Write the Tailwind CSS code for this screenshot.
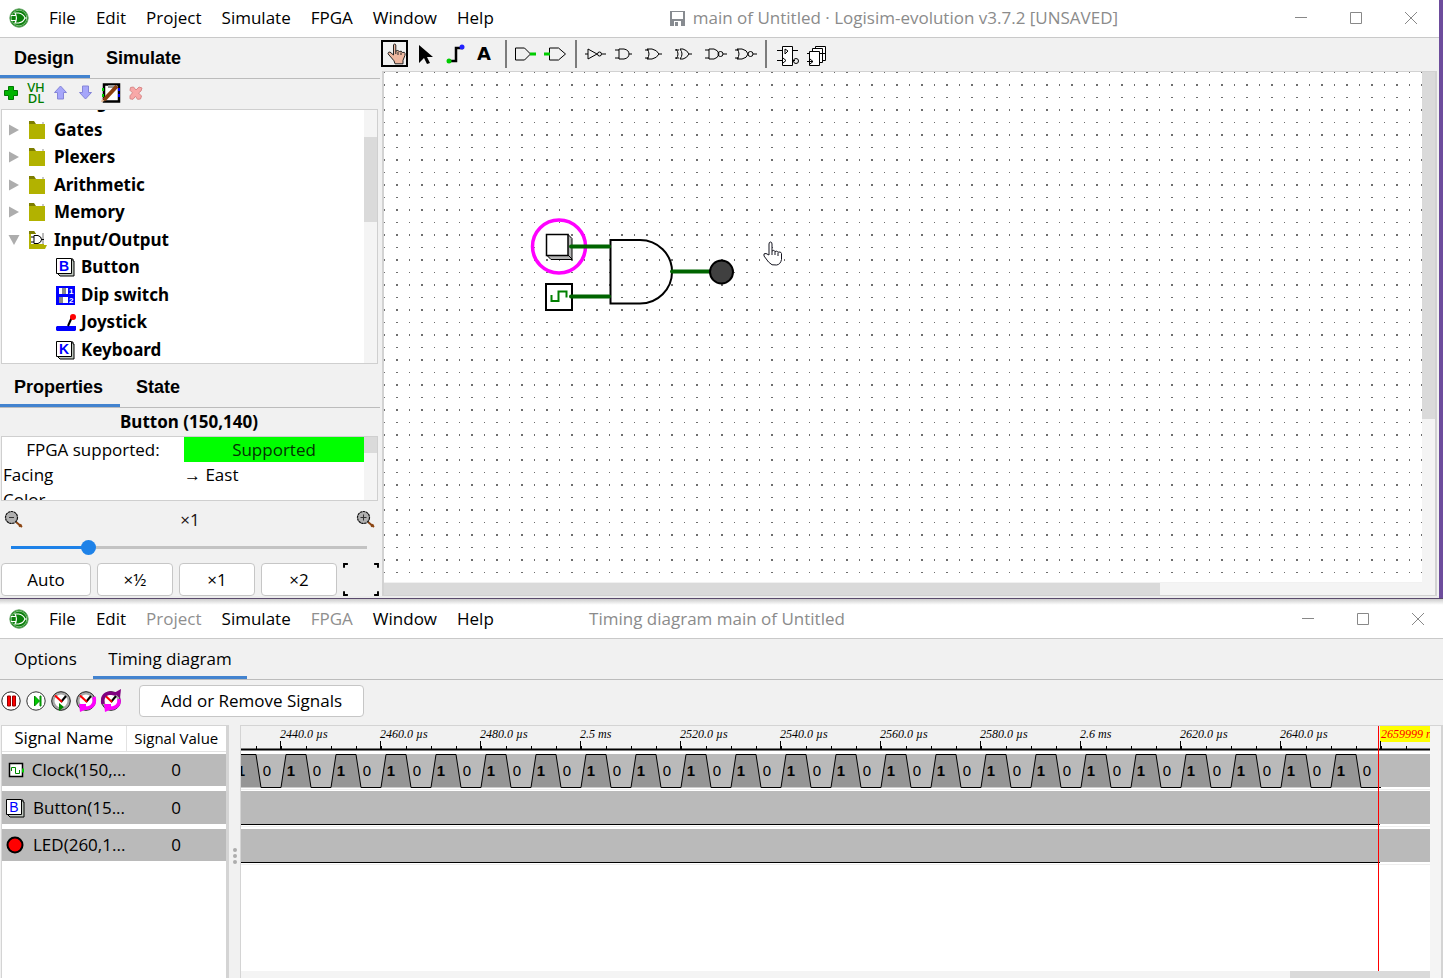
<!DOCTYPE html>
<html lang="en">
<head>
<meta charset="utf-8">
<title>Logisim-evolution</title>
<script src="https://cdn.jsdelivr.net/npm/@tailwindcss/browser@4"></script>
</head>
<body class="bg-[#f1f1f1] font-['Open_Sans','Noto_Sans',sans-serif] text-[17px] leading-6 text-black min-h-screen flex flex-col overflow-hidden">

<svg class="hidden">
  <symbol id="logo" viewBox="0 0 20 20">
    <circle cx="10" cy="10" r="9.2" fill="#0a7f0a" stroke="#6aa86a"/>
    <circle cx="10" cy="10" r="7.800" fill="none" stroke="#cfe8cf" stroke-width=".6"/>
    <path d="M2 7.500h5M2 12.500h5M6 5h3.500C13 5.500 15 7.500 16 10c-1 2.500-3 4.500-6.500 5H6c2-3.500 2-6.500 0-10zM16 10h2" fill="none" stroke="#fff" stroke-width="1.200"/>
  </symbol>
  <symbol id="folder" viewBox="0 0 18 20">
    <path d="M1 1h5l2 3H1z" fill="#7d7d00"/><path d="M14 2h2v2h-2z" fill="#c8c8c8"/><path d="M1 4h16v15H1z" fill="#b2b200"/>
  </symbol>
  <symbol id="right" viewBox="0 0 10 12"><path d="M0 0.500 10 6 0 11.500z" fill="#adadad"/></symbol>
  <symbol id="key" viewBox="0 0 20 20">
    <path d="M17 2h1v2h1v15H5l-2-2" fill="#c0c8c0" stroke="#000"/><path d="M1.500 1.500h15v15h-15z" fill="#fff" stroke="#000"/>
  </symbol>
  <symbol id="lens" viewBox="0 0 20 20">
    <path d="m12 12 6 5" stroke="#8b4513" stroke-width="2"/><path d="m15 16.500 2.500-2" stroke="#8b4513" stroke-width="2"/><circle cx="7.500" cy="7.500" r="6" fill="#b0b0b0" stroke="#111" stroke-width="1.200" stroke-dasharray="2.500 .5"/>
  </symbol>
  <symbol id="clockface" viewBox="0 0 20 20">
    <circle cx="10" cy="10" r="8" fill="#fff" stroke="#a8a8a8" stroke-width="3"/><circle cx="10" cy="10" r="9.300" fill="none" stroke="#222" stroke-width="1"/>
    <path d="m10 11 5-6" stroke="#000" stroke-width="2"/><path d="M4 4.500 11 11" stroke="#f00" stroke-width="2"/>
  </symbol>
</svg>

<!-- Main window -->
<section class="flex bg-[#6d4c9c]">
 <div class="flex-1 min-w-0 bg-[#f1f1f1] mr-1 border-b-2 border-[#ececec]">
  <header class="h-[38px] bg-white border-b border-[#c9c9c9] flex items-center pl-[9px] pr-[21px] pb-[1px]">
    <svg class="size-5 mr-5"><use href="#logo"/></svg>
    <nav class="flex gap-5">
      <button>File</button><button>Edit</button><button>Project</button><button>Simulate</button><button>FPGA</button><button>Window</button><button>Help</button>
    </nav>
    <h1 class="flex-1 flex justify-center items-center gap-2 text-[#8b8b8b] whitespace-nowrap">
      <svg class="size-[15px]" viewBox="0 0 15 15"><path d="M0 0h15v15H0z" fill="#878b90"/><path d="M2 1h11v7H2z" fill="#fff"/><path d="M4 10h7v5H4z" fill="#fff"/><path d="M5 11h3v4H5z" fill="#878b90"/></svg>
      main of Untitled · Logisim-evolution v3.7.2 [UNSAVED]</h1>
    <div class="flex gap-[41px]">
      <button aria-label="Minimize"><svg class="w-[14px] h-[14px]"><path d="M1 6.500h12" stroke="#888"/></svg></button>
      <button aria-label="Maximize"><svg class="w-[14px] h-[14px]"><path d="M1.500 1.500h11v11h-11z" fill="none" stroke="#888"/></svg></button>
      <button aria-label="Close"><svg class="w-[14px] h-[14px]"><path d="m1 1 12 12M13 1 1 13" stroke="#888"/></svg></button>
    </div>
  </header>

  <div class="flex">
   <aside class="w-[382px] shrink-0 flex flex-col">
    <div class="h-[41px] mr-[2px] border-b border-[#bcbcbc] flex font-['Liberation_Sans',sans-serif] font-bold text-[18px]">
      <button class="w-[90px] border-b-3 border-[#4383cf] pl-[14px] pt-[3px] text-left">Design</button>
      <button class="px-4">Simulate</button>
    </div>
    <div class="h-[30px] flex items-center gap-[5px] pl-[1px] pb-[2px]">
      <button aria-label="Add circuit"><svg class="size-5 block"><path d="M7.500 3.500h5v4h4v5h-4v4h-5v-4h-4v-5h4z" fill="#00b400" stroke="#007800"/></svg></button>
      <button aria-label="Add VHDL" class="w-5 flex flex-col items-center font-['Noto_Sans'] text-[13px] leading-[11px] text-[#007d00] font-medium"><span>VH</span><span>DL</span></button>
      <button aria-label="Move up"><svg class="size-5 block"><path d="m9.500 3 6 6.500h-3V16h-6V9.500h-3z" fill="#a6a6fa" stroke="#8585d8"/></svg></button>
      <button aria-label="Move down"><svg class="size-5 block"><path d="m9.500 16 6-6.500h-3V3h-6v6.500h-3z" fill="#a6a6fa" stroke="#8585d8"/></svg></button>
      <button aria-label="Edit appearance"><svg class="size-5 block"><path d="M3 1.500h15v17H3z" fill="#fff" stroke="#000" stroke-width="2.500"/><path d="M2 5v3m0 3v3" stroke="#0c0" stroke-width="2"/><path d="M18 5v3m0 3v3" stroke="#00f" stroke-width="2"/><path d="M7 3.500h9" stroke="#999" stroke-width="3"/><path d="m3 17 13-14" stroke="#8b4010" stroke-width="4"/><path d="m0 19 1-3 3 2z" fill="#e8b890"/></svg></button>
      <button aria-label="Delete"><svg class="size-5 block"><path d="m4.500 4.500 3-.5 2.500 3 3-3 3 1-1 3-2.500 2 3 3-1 3-3 .3-2-3-2.500 3-3-.5v-3l2.500-3-2.500-2.500z" fill="#f8a8a8" stroke="#d98888"/></svg></button>
    </div>
    <div class="ml-[1px] mr-1 border border-[#cfcfcf] bg-white flex font-['Noto_Sans',sans-serif] font-bold">
      <ul class="flex-1">
        <li class="h-[6px] overflow-hidden flex items-end pl-[52px]"><span class="leading-[28px] text-[16px]">Wiring</span></li>
        <li class="h-[27px] flex items-center pl-[7px]"><svg class="w-[10px] h-3 mr-[9px]"><use href="#right"/></svg><svg class="w-[18px] h-5 mr-2"><use href="#folder"/></svg>Gates</li>
        <li class="h-7 flex items-center pl-[7px]"><svg class="w-[10px] h-3 mr-[9px]"><use href="#right"/></svg><svg class="w-[18px] h-5 mr-2"><use href="#folder"/></svg>Plexers</li>
        <li class="h-[27px] flex items-center pl-[7px]"><svg class="w-[10px] h-3 mr-[9px]"><use href="#right"/></svg><svg class="w-[18px] h-5 mr-2"><use href="#folder"/></svg>Arithmetic</li>
        <li class="h-7 flex items-center pl-[7px]"><svg class="w-[10px] h-3 mr-[9px]"><use href="#right"/></svg><svg class="w-[18px] h-5 mr-2"><use href="#folder"/></svg>Memory</li>
        <li class="h-[27px] flex items-center pl-[6px]"><svg class="w-3 h-[10px] mr-2"><path d="M.5 0h11L6 10z" fill="#adadad"/></svg><svg class="w-[20px] h-5 mr-[6px]"><path d="M1 1h5l2 3h8v11h3l-2 4H1z" fill="#b2b200"/><path d="M1 1h5l2 3H1z" fill="#7d7d00"/><path d="M3 4h12v10H3z" fill="#fff"/><path d="M14 3h2v11h-2z" fill="#bbb"/><path d="M3 7h3m-3 5h3m0-6.500h4q3.500 1 3.500 4t-3.500 4H6zM13 9.500h3" fill="none" stroke="#000"/></svg>Input/Output</li>
        <li class="h-7 flex items-center pl-[53px]"><svg class="size-5 mr-[6px]"><use href="#key"/><text x="9" y="14" text-anchor="middle" font-size="14" fill="#00f" font-family="Liberation Sans">B</text></svg>Button</li>
        <li class="h-[27px] flex items-center pl-[53px]"><svg class="size-5 mr-[6px]"><path d="M1 1h19v19H1z" fill="#00f"/><path d="M4 3h9v6H4zM4 12h9v6H4z" fill="#fff"/><path d="M7 3h4v6H7zM4 12h4v6H4z" fill="#888"/><text x="14" y="9" font-size="8" fill="#fff" font-family="Liberation Sans">1</text><text x="14" y="18" font-size="8" fill="#fff" font-family="Liberation Sans">2</text></svg>Dip switch</li>
        <li class="h-7 flex items-center pl-[53px]"><svg class="w-[22px] h-5 mr-1"><path d="M2 14h19v4l-1 1H2l-1-1v-3z" fill="#00f"/><path d="m13 14 4-9" stroke="#000" stroke-width="2"/><circle cx="18" cy="5" r="3" fill="#f00"/></svg>Joystick</li>
        <li class="h-[27px] flex items-center pl-[53px]"><svg class="size-5 mr-[6px]"><use href="#key"/><text x="9" y="14" text-anchor="middle" font-size="14" fill="#00f" font-family="Liberation Sans">K</text></svg>Keyboard</li>
      </ul>
      <div class="w-[13px] bg-[#f4f4f4] pt-[27px]"><div class="h-[85px] bg-[#dadada]"></div></div>
    </div>

    <div class="h-11 mr-[2px] border-b border-[#bcbcbc] flex font-['Liberation_Sans',sans-serif] font-bold text-[18px]">
      <button class="w-[120px] border-b-3 border-[#4383cf] pl-[14px] pt-[5px] text-left">Properties</button>
      <button class="px-4 pt-[3px]">State</button>
    </div>
    <h2 class="h-7 text-center font-['Noto_Sans',sans-serif] font-bold leading-[27px] pr-1">Button (150,140)</h2>
    <div class="ml-[1px] mr-1 h-[65px] overflow-hidden border border-[#cfcfcf] bg-white flex">
      <table class="flex-1 flex flex-col leading-[26px]">
        <tbody class="flex flex-col">
        <tr class="flex h-[25px]"><td class="w-[182px] text-center">FPGA supported:</td><td class="flex-1 bg-[#00ff00] text-center text-[#043004]">Supported</td></tr>
        <tr class="flex h-[25px]"><td class="w-[182px] pl-[1px]">Facing</td><td class="flex-1">→ East</td></tr>
        <tr class="flex h-[25px]"><td class="w-[182px] pl-[1px]">Color</td><td></td></tr>
        </tbody>
      </table>
      <div class="w-[13px] bg-[#f4f4f4]"><div class="h-4 bg-[#dadada]"></div></div>
    </div>
    <div class="h-[37px] flex items-center justify-between pl-1 pr-[6px]">
      <svg class="size-5"><use href="#lens"/><path d="M5 7.500h5" stroke="#333"/></svg>
      <output class="text-[#201010]">×1</output>
      <svg class="size-5"><use href="#lens"/><path d="M4.500 7.500h6m-3-3v6" stroke="#333"/></svg>
    </div>
    <div class="h-[25px] flex items-start pl-[11px] pr-[15px]">
      <input type="range" aria-label="Zoom" min="0" max="200" value="41" class="w-full h-[18px] appearance-none bg-[linear-gradient(90deg,#1e82e8_22%,#c3c3c3_22%)] bg-[length:100%_3px] bg-center bg-no-repeat [&::-webkit-slider-thumb]:appearance-none [&::-webkit-slider-thumb]:size-[15px] [&::-webkit-slider-thumb]:rounded-full [&::-webkit-slider-thumb]:bg-[#1e82e8]">
    </div>
    <div class="flex gap-[6px] pl-[1px] pr-[3px] h-[33px]">
      <button class="w-[90px] border border-[#c6c6c6] rounded bg-white">Auto</button>
      <button class="w-[76px] border border-[#c6c6c6] rounded bg-white">×½</button>
      <button class="w-[76px] border border-[#c6c6c6] rounded bg-white">×1</button>
      <button class="w-[76px] border border-[#c6c6c6] rounded bg-white">×2</button>
      <button aria-label="Fit" class="flex-1"><svg class="w-full h-[33px] block" viewBox="0 0 37 34"><path d="M1 5V1h4M32 1h4v4M1 29v4h4M32 33h4v-4" fill="none" stroke="#000" stroke-width="2"/></svg></button>
    </div>
   </aside>

   <main class="flex-1 min-w-0 flex flex-col">
    <div class="h-[33px]" role="toolbar">
     <svg class="w-[470px] h-[33px] block overflow-visible" fill="none" stroke="#000">
      <path d="M0 3h25v25H0z" stroke-width="2"/>
      <path d="M11.500 17V7q1-2.500 2.300 0v6l2-.5 1.500 1 2-.3 1 1.300 2-.2q1.200 1 .7 3l-2 5v3.500h-8l-1-3-6-7q0-2 2-1.800l3.500 3" fill="#efb8a0" stroke="#222"/><path d="M16 14v3m3-2.500V17M13.800 13v3" stroke="#222"/>
      <path d="M37 7v18l5-5 3 6 3-1-3-6h6z" fill="#000" stroke="none"/>
      <path d="M67 23h7V10h7" stroke-width="2.500"/><circle cx="67" cy="23" r="2.500" fill="#0c0" stroke="none"/><circle cx="80" cy="9" r="2.500" fill="#22f" stroke="none"/>
      <text x="95" y="22" font-family="DejaVu Sans" font-weight="bold" font-size="18" fill="#000" stroke="none">A</text>
      <path d="M124 2v28M194 2v28M384 2v28" stroke="#7c7c7c" stroke-width="2"/>
      <path d="M133.500 10h9l6 6-6 6h-9zM167.500 10h9l7 6-7 6h-9z"/><path d="M148 16h6M162 16h6" stroke="#00cc00" stroke-width="3"/>
      <path d="M203 16h3m0-5v10l9-5zM220 16h4"/><circle cx="217.500" cy="16" r="2"/>
      <path d="M233 12h4m-4 8h4m0-9h5q5 1 5 5t-5 5h-5zM247 16h3"/>
      <path d="M263 12h4m-4 8h4m-2-9h5q5 1 7 5-2 4-7 5h-5q4-5 0-10zM277 16h3"/>
      <path d="M293 12h4m-4 8h4m-3-9q4 5 0 10m4-10h3q4 1 6 5-2 4-6 5h-3q4-5 0-10zM307 16h3"/>
      <path d="M323 12h4m-4 8h4m0-9h5q4 1 5 5-1 4-5 5h-5zM341 16h4"/><circle cx="338.500" cy="16" r="2.500"/>
      <path d="M353 12h4m-4 8h4m-2-9h5q5 1 6 5-1 4-6 5h-5q4-5 0-10zM371 16h4"/><circle cx="368.500" cy="16" r="2.500"/>
      <path d="M400.500 8.500h10v19h-10zM395 12.500h5m11 0h5M395 22.500h5M411 22.500h2M401 20l3 2.500-3 2.500" fill="#fff"/><path d="m403 11 3 2-3 3z"/><circle cx="414" cy="23" r="2.500"/>
      <path d="M433.500 8.500h10v14h-10z" fill="#fff"/><path d="M430.500 10.500h10v14h-10z" fill="#fff"/><path d="M427.500 13.500h10v14h-10zM425 15.500h3m-3 8h6M437 15.500h7M428 21l3 2.500-3 2.500" fill="#fff"/>
     </svg>
    </div>
    <div class="flex-1 grid grid-cols-[1fr_13px] grid-rows-[1fr_12px] border-2 border-[#d2d2d2] border-t-1 border-b-1 mr-[2px]">
      <svg class="w-full h-[510px] block bg-white" fill="none">
        <defs><pattern id="grid" width="25" height="25" patternUnits="userSpaceOnUse"><path d="M12 12h2v2h-2zM0 12h1v2H0zM12 0h2v1h-2zM0 0h1v1H0z" fill="#6e6e6e"/></pattern></defs>
        <rect width="100%" height="100%" fill="url(#grid)"/>
        <path d="M184 162.500l4 4v21h-21l-4-4z" fill="#b4b4b4" stroke="#000"/><path d="M184 183l4 4" stroke="#000"/>
        <path d="M162.500 162.500H184V183.500H162.500z" fill="#fff" stroke="#000" stroke-width="1.500"/>
        <path d="M162 212h26v26h-26z" fill="#fff" stroke="#000" stroke-width="2"/>
        <path d="M167.500 223v6h7v-9.500h8v6" stroke="#008000" stroke-width="2"/>
        <path d="M226.500 168H256a32 31.700 0 0 1 0 63.500H226.500z" stroke="#000" stroke-width="2"/>
        <circle cx="175" cy="174.500" r="26.500" stroke="#f0f" stroke-width="3.500"/>
        <path d="M187 174.500h38M187 224.500h38M288 199.500h38" stroke="#006400" stroke-width="4" stroke-linecap="round"/>
        <circle cx="337.500" cy="200" r="11.500" fill="#404040" stroke="#000" stroke-width="2"/>
        <path d="M385 183v-11q0-2 1.500-2t1.500 2v7q2-1.500 3 .5 2-1 3 .7 3-1 3.500 1.300v6q-1 5-5 5.500-5 1-8-3l-4.500-6q-1-3 2-2.500z" fill="#fff" stroke="#151520"/><path d="M388 179v4m3-3v3m3-2v3" stroke="#151520"/>
      </svg>
      <div class="bg-[#f4f4f4]"><div class="h-[347px] bg-[#dadada]"></div></div>
      <div class="bg-[#f4f4f4] pr-[262px]"><div class="h-full bg-[#dadada]"></div></div>
      <div class="bg-[#f4f4f4]"></div>
    </div>
   </main>
  </div>
 </div>
</section>

<!-- Timing diagram window -->
<section class="flex-1 flex flex-col border-t border-[#5a4a6c]">
  <header class="h-10 bg-linear-to-b from-[#cccccc] to-white to-15% border-b border-[#c9c9c9] grid grid-cols-[1fr_auto_1fr] items-center pl-[9px] pr-[18px]">
    <div class="flex items-center">
    <svg class="size-5 mr-5"><use href="#logo"/></svg>
    <nav class="flex gap-5">
      <button>File</button><button>Edit</button><button class="text-[#8f8f8f]" disabled>Project</button><button>Simulate</button><button class="text-[#8f8f8f]" disabled>FPGA</button><button>Window</button><button>Help</button>
    </nav>
    </div>
    <h1 class="text-[#8b8b8b]">Timing diagram main of Untitled</h1>
    <div class="flex gap-[41px] justify-end">
      <button aria-label="Minimize"><svg class="w-[14px] h-[14px]"><path d="M1 6.500h12" stroke="#888"/></svg></button>
      <button aria-label="Maximize"><svg class="w-[14px] h-[14px]"><path d="M1.500 1.500h11v11h-11z" fill="none" stroke="#888"/></svg></button>
      <button aria-label="Close"><svg class="w-[14px] h-[14px]"><path d="m1 1 12 12M13 1 1 13" stroke="#888"/></svg></button>
    </div>
  </header>
  <div class="h-[41px] border-b border-[#bcbcbc] flex">
    <button class="w-[93px] pl-[14px] text-left">Options</button>
    <button class="w-[154px] border-b-3 border-[#4383cf] pt-[3px]">Timing diagram</button>
  </div>
  <div class="h-[45px] flex items-center gap-[5px] pl-[1px] pb-[3px]">
    <button aria-label="Pause"><svg class="size-5 block"><circle cx="10" cy="10" r="9.200" fill="#fff" stroke="#222"/><path d="M6.500 5h3v10h-3zM11.500 5h3v10h-3z" fill="#f00" stroke="#900"/></svg></button>
    <button aria-label="Step"><svg class="size-5 block"><circle cx="10" cy="10" r="9.200" fill="#fff" stroke="#333"/><path d="m8.500 5 5 5-5 5zM14 5h1v10h-1z" fill="#0c0" stroke="#080"/></svg></button>
    <button aria-label="Tick"><svg class="size-5 block"><use href="#clockface"/><path d="m8 12 5 4-5 4z" fill="#080"/></svg></button>
    <button aria-label="Half tick"><svg class="size-5 block overflow-visible"><use href="#clockface"/><path d="M18 6q2 9-6 11H9" fill="none" stroke="#f0f" stroke-width="3.500"/><path d="M3 13h7v3l1 2-7 3z" fill="#f0f"/></svg></button>
    <button aria-label="Full tick"><svg class="size-5 block overflow-visible"><use href="#clockface"/><path d="M2 13Q0 3 9 2l6 1" fill="none" stroke="#800080" stroke-width="3.500"/><path d="m20-2-1 9-6-5z" fill="#800080"/><path d="M18 8q1 7-6 9H9" fill="none" stroke="#f0f" stroke-width="3.500"/><path d="M3 13h7v3l1 2-7 3z" fill="#f0f"/></svg></button>
    <button class="ml-[13px] h-8 w-[225px] border border-[#c6c6c6] rounded bg-white">Add or Remove Signals</button>
  </div>
  <div class="flex-1 flex">
    <div class="w-[228px] ml-[1px] bg-white border border-r-3 border-[#d4d4d4] border-b-0">
      <table class="w-full table-fixed border-collapse">
        <thead><tr class="h-[25px]"><th class="w-[124px] p-0 font-normal border-r border-b border-[#e2e2e2]">Signal Name</th><th class="p-0 font-normal text-[15px] border-b border-[#e2e2e2]">Signal Value</th></tr></thead>
        <tbody>
          <tr class="h-[3px]"></tr>
          <tr class="h-8 bg-[#bababa]"><td class="p-0"><div class="flex items-center gap-2 pl-[3px]"><svg class="size-5"><path d="M4.500 3.500h13v13h-13z" fill="#fff" stroke="#000" stroke-width="1.500"/><path d="M6.500 11V7.500h4v6h4V10" fill="none" stroke="#008a00"/><path d="M18 8.500v4" stroke="#0c0" stroke-width="2"/></svg>Clock(150,...</div></td><td class="p-0 text-center">0</td></tr>
          <tr class="h-[5px]"></tr>
          <tr class="h-[33px] bg-[#bababa]"><td class="p-0"><div class="flex items-center gap-2 pl-[3px]"><svg class="size-5"><use href="#key"/><text x="9" y="14" text-anchor="middle" font-size="14" fill="#00f" font-family="Liberation Sans">B</text></svg>Button(15...</div></td><td class="p-0 text-center">0</td></tr>
          <tr class="h-[5px]"></tr>
          <tr class="h-8 bg-[#bababa]"><td class="p-0"><div class="flex items-center gap-2 pl-[3px]"><svg class="size-5"><circle cx="10" cy="10" r="7.500" fill="#f00" stroke="#000" stroke-width="2"/></svg>LED(260,1...</div></td><td class="p-0 text-center">0</td></tr>
        </tbody>
      </table>
    </div>
    <div class="w-[11px] flex flex-col items-center gap-[2px] pt-[123px]">
      <i class="size-1 rounded-full bg-[#adadad]"></i><i class="size-1 rounded-full bg-[#adadad]"></i><i class="size-1 rounded-full bg-[#adadad]"></i>
    </div>
    <div class="flex-1 min-w-0 flex border border-r-2 border-b-0 border-[#d4d4d4]">
      <div class="flex-1 min-w-0 bg-white flex flex-col">
        <svg id="wave" class="w-full h-[246px] block flex-1" fill="none">
          <rect width="100%" height="24" fill="#f1f1f1"/>
          <path d="M0 28h1189v33H0zM0 65h1189v33H0zM0 103h1189v33H0z" fill="#bababa"/>
          <path d="M0 63.500h1189M0 100.500h1189M0 138.500h1189" stroke="#eee"/>
          <path d="M1139 0h50v16h-50z" fill="#ff0"/>
          <text x="1140" y="12" font-family="Liberation Serif" font-style="italic" font-size="12" fill="#f00">2659999 ns</text>
          <g id="pulses" stroke="#000" font-family="Liberation Sans Narrow, Liberation Sans" font-size="15"></g>
          <path d="M0 23.500h1189" stroke="#000" stroke-width="2"/>
          <path d="M0 98.500h1139M0 136.500h1139" stroke="#000"/>
          <path d="M1137.500 0v260" stroke="#f00" stroke-width="1"/>
        </svg>
        <div class="h-[7px] bg-[#f4f4f4] flex justify-end"><div class="w-[140px] bg-[#dadada]"></div></div>
      </div>
      <div class="w-[11px] bg-[#f4f4f4]"></div>
    </div>
  </div>
</section>

<script>
const NS = 'http://www.w3.org/2000/svg';
const g = document.getElementById('pulses');
const add = (name, attrs, text) => {
  const e = document.createElementNS(NS, name);
  for (const k in attrs) e.setAttribute(k, attrs[k]);
  if (text) e.textContent = text;
  g.append(e);
};
// one clock period is 50px wide
for (let x = -10; x < 1139; x += 50) {
  add('path', {d: `M${x} 61.500L${x + 5} 28.500H${x + 25}L${x + 30} 61.500z`, fill: '#969696', stroke: 'none'});
  add('path', {d: `M${x} 61.500L${x + 5} 28.500H${x + 25}L${x + 30} 61.500H${x + 50}`});
  add('text', {x: x + 10, y: 50, 'text-anchor': 'middle', fill: '#000', stroke: 'none', 'font-weight': 'bold'}, '1');
  add('text', {x: x + 36, y: 50, 'text-anchor': 'middle', fill: '#000', stroke: 'none'}, '0');
}
for (let x = 15; x < 1189; x += 25) add('path', {d: `M${x}.5 23v-3`});
['2440.0 µs', '2460.0 µs', '2480.0 µs', '2.5 ms', '2520.0 µs', '2540.0 µs', '2560.0 µs', '2580.0 µs', '2.6 ms', '2620.0 µs', '2640.0 µs', ''].forEach((t, i) => {
  const x = 39 + i * 100;
  add('path', {d: `M${x}.5 23v-8`});
  if (t) add('text', {x, y: 12, fill: '#000', stroke: 'none', 'font-family': 'Liberation Serif', 'font-style': 'italic', 'font-size': 12}, t);
});
</script>
</body>
</html>
